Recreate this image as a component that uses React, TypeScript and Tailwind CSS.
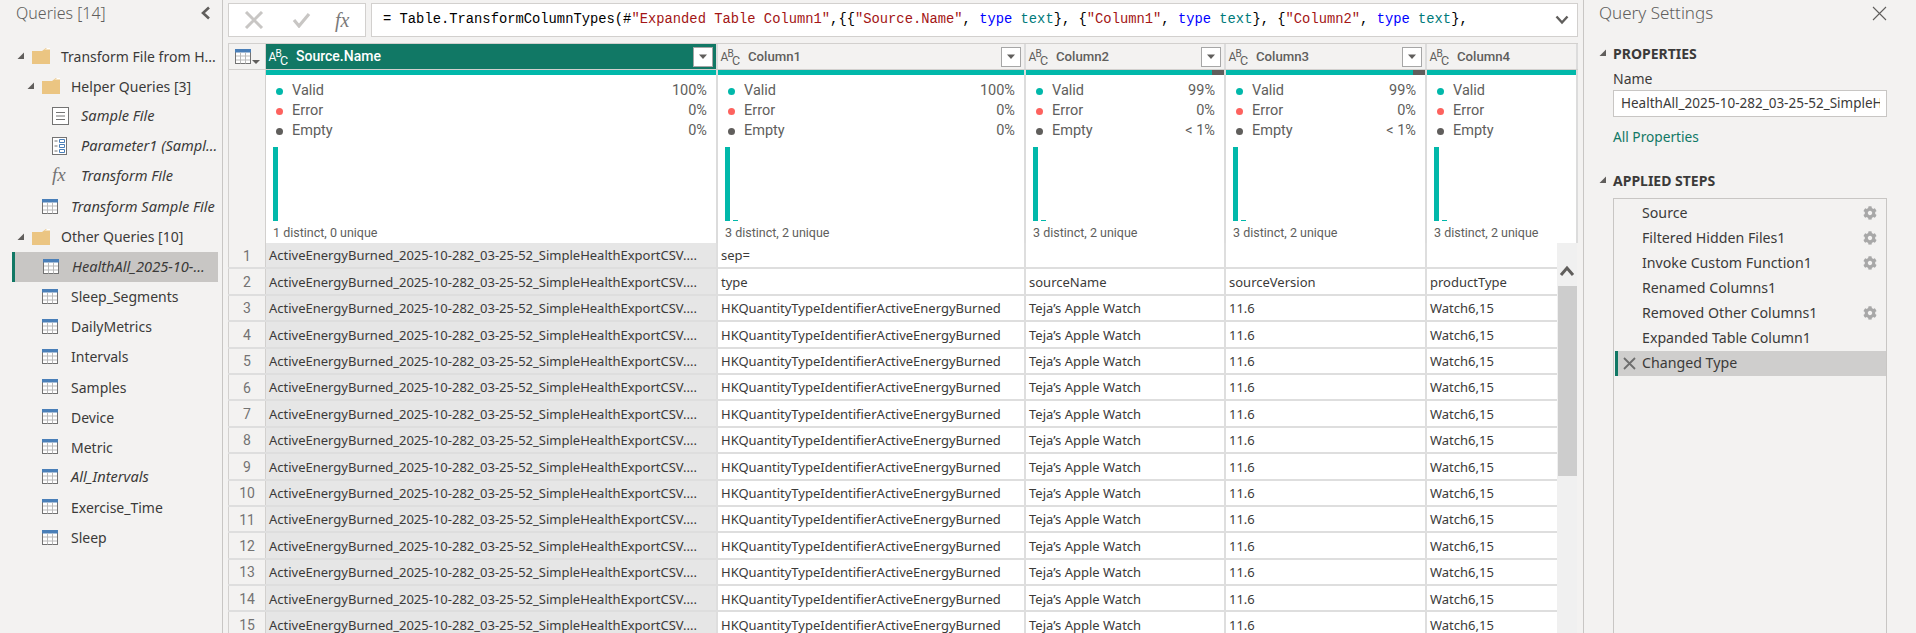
import { FaCog } from 'react-icons/fa';

const ui = "font-['Noto_Sans',sans-serif]";
const din = "font-['Roboto',sans-serif]";

function TableIcon() {
  return (
    <svg width="17" height="16" viewBox="0 0 17 16" className="shrink-0">
      <rect x="0.5" y="0.5" width="15" height="14" fill="#fff" stroke="#737373" />
      <rect x="0" y="0" width="16" height="3.5" fill="#4a7fb8" />
      <path d="M5.5 3.5v11M10.5 3.5v11M1 7h14M1 11h14" stroke="#b9b9b9" fill="none" />
    </svg>
  );
}

function FolderIcon() {
  return (
    <svg width="18" height="16" viewBox="0 0 18 16" className="shrink-0">
      <path d="M0 3h10l4-3h4v16H0z" fill="#ebc582" />
      <path d="M12 2.2l3-2.2h3v1.6h-4.5z" fill="#fff" />
    </svg>
  );
}

function Caret() {
  return (
    <svg width="8" height="8" viewBox="0 0 8 8" className="shrink-0">
      <path d="M7 0.5V7H0.5z" fill="#605e5c" />
    </svg>
  );
}

function DocIcon() {
  return (
    <svg width="17" height="18" viewBox="0 0 17 18" className="shrink-0">
      <rect x="0.5" y="0.5" width="16" height="17" fill="#fff" stroke="#737373" />
      <path d="M4 5.5h9M4 9h9M4 12.5h9" stroke="#737373" fill="none" />
    </svg>
  );
}

function ParamIcon() {
  return (
    <svg width="15" height="18" viewBox="0 0 15 18" className="shrink-0">
      <rect x="0.5" y="0.5" width="14" height="17" fill="#fff" stroke="#737373" />
      <path d="M2.5 4h3M2.5 9h3M2.5 14h3" stroke="#737373" fill="none" />
      <path d="M7.5 2.5h5v3h-5zM7.5 7.5h5v3h-5zM7.5 12.5h5v3h-5z" stroke="#4a7fb8" fill="none" />
    </svg>
  );
}

function FxGlyph({ className }: { className: string }) {
  return <span className={"font-['Liberation_Serif',serif] italic leading-none " + className}>fx</span>;
}

function AbcIcon({ color }: { color: string }) {
  return (
    <svg width="20" height="20" viewBox="0 0 20 20" className="shrink-0" fill={color} fontFamily="Roboto, sans-serif" fontWeight="400">
      <text x="0.5" y="14" fontSize="12">A</text>
      <text x="7.5" y="9.5" fontSize="10">B</text>
      <text x="12" y="18" fontSize="12.5">C</text>
    </svg>
  );
}

function FilterButton() {
  return (
    <div className="w-[20px] h-[20px] shrink-0 bg-white border border-[#a6a6a6] flex items-center justify-center">
      <svg width="10" height="6" viewBox="0 0 10 6">
        <path d="M1 0.5h8L5 5z" fill="#605e5c" />
      </svg>
    </div>
  );
}

const queries = [
  { label: 'Transform File from H...', pad: 'pl-[5px]', caret: true, icon: 'folder' },
  { label: 'Helper Queries [3]', pad: 'pl-[15px]', caret: true, icon: 'folder' },
  { label: 'Sample File', pad: 'pl-[40px]', icon: 'doc', italic: true },
  { label: 'Parameter1 (Sampl...', pad: 'pl-[40px]', icon: 'param', italic: true },
  { label: 'Transform File', pad: 'pl-[40px]', icon: 'fx', italic: true },
  { label: 'Transform Sample File', pad: 'pl-[30px]', icon: 'table', italic: true },
  { label: 'Other Queries [10]', pad: 'pl-[5px]', caret: true, icon: 'folder' },
  { label: 'HealthAll_2025-10-...', pad: 'pl-[31px]', icon: 'table', italic: true, selected: true },
  { label: 'Sleep_Segments', pad: 'pl-[30px]', icon: 'table' },
  { label: 'DailyMetrics', pad: 'pl-[30px]', icon: 'table' },
  { label: 'Intervals', pad: 'pl-[30px]', icon: 'table' },
  { label: 'Samples', pad: 'pl-[30px]', icon: 'table' },
  { label: 'Device', pad: 'pl-[30px]', icon: 'table' },
  { label: 'Metric', pad: 'pl-[30px]', icon: 'table' },
  { label: 'All_Intervals', pad: 'pl-[30px]', icon: 'table', italic: true },
  { label: 'Exercise_Time', pad: 'pl-[30px]', icon: 'table' },
  { label: 'Sleep', pad: 'pl-[30px]', icon: 'table' },
];

function QueriesPanel() {
  return (
    <aside className={'w-[223px] shrink-0 bg-[#f3f2f1] border-r border-[#c8c6c4] ' + ui}>
      <div className="h-[42px] pl-[16px] pr-[10px] pb-[17px] flex items-center justify-between">
        <span className="text-[16px] font-light text-[#605e5c]">Queries [14]</span>
        <svg width="11" height="14" viewBox="0 0 11 14" className="mr-[1px]">
          <path d="M9 1.5L3 7l6 5.5" stroke="#605e5c" strokeWidth="2.6" fill="none" />
        </svg>
      </div>
      <div className="ml-[12px] mr-[4px] text-[14px] text-[#3b3a39] -mt-[1px]">
        {queries.map((q) => (
          <div
            key={q.label}
            className={
              'h-[30.1px] flex items-center whitespace-nowrap overflow-hidden ' +
              q.pad +
              (q.selected ? ' bg-[#c8c6c4] border-l-[3px] border-[#117865] !pl-[28px]' : '') +
              (q.italic ? ' italic text-[14.6px]' : '')
            }
          >
            {q.caret && (
              <span className="w-[15px] shrink-0">
                <Caret />
              </span>
            )}
            <span className="w-[29px] shrink-0">
              {q.icon === 'folder' && <FolderIcon />}
              {q.icon === 'table' && <TableIcon />}
              {q.icon === 'doc' && <DocIcon />}
              {q.icon === 'param' && <ParamIcon />}
              {q.icon === 'fx' && <FxGlyph className="text-[19px] text-[#737373]" />}
            </span>
            <span>{q.label}</span>
          </div>
        ))}
      </div>
    </aside>
  );
}

function FormulaBar() {
  const kw = 'text-[#0000ff]';
  const str = 'text-[#a31515]';
  const ty = 'text-[#007a7a]';
  return (
    <div className="h-[43px] pt-[3px] pb-[6px] flex gap-[5px] shrink-0">
      <div className="w-[138px] bg-white border border-[#d2d0ce] flex items-center">
        <svg width="20" height="18" viewBox="0 0 20 18" className="ml-[15px]">
          <path d="M2 1l16 16M18 1L2 17" stroke="#c8c6c4" strokeWidth="3" />
        </svg>
        <svg width="19" height="16" viewBox="0 0 19 16" className="ml-[28px]">
          <path d="M2 8l5 6L17 2" stroke="#c8c6c4" strokeWidth="3.2" fill="none" />
        </svg>
        <FxGlyph className="ml-[24px] text-[20px] text-[#7a7a7a]" />
      </div>
      <div className="w-[1207px] bg-white border border-[#d2d0ce] flex items-center justify-between pl-[11px] pr-[8px]">
        <span className="font-['Liberation_Mono',monospace] text-[13.8px] whitespace-pre text-black">
          {'= Table.TransformColumnTypes(#'}
          <span className={str}>"Expanded Table Column1"</span>
          {',{{'}
          <span className={str}>"Source.Name"</span>
          {', '}
          <span className={kw}>type</span> <span className={ty}>text</span>
          {'}, {'}
          <span className={str}>"Column1"</span>
          {', '}
          <span className={kw}>type</span> <span className={ty}>text</span>
          {'}, {'}
          <span className={str}>"Column2"</span>
          {', '}
          <span className={kw}>type</span> <span className={ty}>text</span>
          {'},'}
        </span>
        <svg width="14" height="10" viewBox="0 0 14 10">
          <path d="M1.5 1.5L7 7.5l5.5-6" stroke="#605e5c" strokeWidth="2.4" fill="none" />
        </svg>
      </div>
    </div>
  );
}

const columns = [
  { name: 'Source.Name', width: 'w-[452px]', stats: ['100%', '0%', '0%'], footer: '1 distinct, 0 unique', small: false, gray: false, active: true, filter: true },
  { name: 'Column1', width: 'w-[308px]', stats: ['100%', '0%', '0%'], footer: '3 distinct, 2 unique', small: true, gray: false, active: false, filter: true },
  { name: 'Column2', width: 'w-[200px]', stats: ['99%', '0%', '< 1%'], footer: '3 distinct, 2 unique', small: true, gray: true, active: false, filter: true },
  { name: 'Column3', width: 'w-[201px]', stats: ['99%', '0%', '< 1%'], footer: '3 distinct, 2 unique', small: true, gray: true, active: false, filter: true },
  { name: 'Column4', width: 'w-[151px]', stats: ['', '', ''], footer: '3 distinct, 2 unique', small: true, gray: false, active: false, filter: false },
];

const dots = [
  { label: 'Valid', color: 'bg-[#01b8aa]' },
  { label: 'Error', color: 'bg-[#fd625e]' },
  { label: 'Empty', color: 'bg-[#605e5c]' },
];

function HeaderRow() {
  return (
    <div className="h-[27px] flex shrink-0 border-y border-[#d2d0ce] bg-[#f3f2f1] overflow-hidden">
      <div className="w-[38px] shrink-0 flex items-center pl-[6px] border-x border-[#d2d0ce]">
        <TableIcon />
        <svg width="8" height="4" viewBox="0 0 8 4" className="self-end mb-[5px]">
          <path d="M0 0h8L4 4z" fill="#605e5c" />
        </svg>
      </div>
      {columns.map((c) => (
        <div
          key={c.name}
          className={
            'shrink-0 flex items-center pl-[2px] pr-[3px] border-r-2 border-[#dcdcdc] font-medium ' +
            c.width +
            (c.active ? ' bg-[#117865] text-white' : ' text-[#605e5c]')
          }
        >
          <AbcIcon color={c.active ? '#ffffff' : '#605e5c'} />
          <span className={'ml-[8px] flex-1 ' + din + (c.active ? ' text-[14px]' : ' text-[13.2px]')}>{c.name}</span>
          {c.filter && <FilterButton />}
        </div>
      ))}
    </div>
  );
}

function ProfileRow() {
  return (
    <div className="h-[173px] flex shrink-0 overflow-hidden">
      <div className="w-[38px] shrink-0 bg-[#f3f2f1] border-x border-[#d2d0ce]" />
      {columns.map((c) => (
        <div key={c.name} className={'shrink-0 bg-white flex flex-col border-r-2 border-[#dcdcdc] ' + c.width + ' ' + din}>
          <div className="h-[5px] flex">
            <div className="flex-1 bg-[#01b8aa]" />
            {c.gray && <div className="w-[12px] bg-[#605e5c]" />}
          </div>
          <div className="pt-[6px] pl-[7px] pr-[9px] text-[14.5px] text-[#605e5c]">
            {dots.map((d, i) => (
              <div key={d.label} className="h-[20px] flex items-center">
                <span className={'w-[7px] h-[7px] rounded-full ml-[3px] mr-[9px] ' + d.color} />
                <span className="flex-1">{d.label}</span>
                <span>{c.stats[i]}</span>
              </div>
            ))}
          </div>
          <div className="h-[74px] mt-[6px] ml-[7px] flex items-end gap-[3px]">
            <div className="w-[5px] h-full bg-[#01b8aa]" />
            {c.small && <div className="w-[5px] h-[1px] bg-[#01b8aa]" />}
          </div>
          <div className="mt-[3px] ml-[7px] text-[12.5px] text-[#605e5c] whitespace-nowrap">{c.footer}</div>
        </div>
      ))}
    </div>
  );
}

const source = 'ActiveEnergyBurned_2025-10-282_03-25-52_SimpleHealthExportCSV....';
const rows = Array.from({ length: 15 }, (_, i) => {
  if (i === 0) return ['sep=', '', '', ''];
  if (i === 1) return ['type', 'sourceName', 'sourceVersion', 'productType'];
  return ['HKQuantityTypeIdentifierActiveEnergyBurned', 'Teja’s Apple Watch', '11.6', 'Watch6,15'];
});
const cellWidths = ['w-[308px]', 'w-[200px]', 'w-[201px]', 'w-[130px]'];

function DataRows() {
  return (
    <div className={'flex-1 min-h-0 flex overflow-hidden text-[13px] text-[#3b3a39] ' + ui}>
      <div className="w-[1329px] shrink-0">
        {rows.map((r, i) => (
          <div key={i} className="h-[26.4px] flex border-b-2 border-[#dedede]">
            <div className={'w-[38px] shrink-0 bg-[#f3f2f1] border-x border-[#d2d0ce] flex items-center justify-center pt-[2px] text-[14px] text-[#737373] ' + din}>{i + 1}</div>
            <div className="w-[452px] shrink-0 bg-[#e6e6e6] border-r-2 border-[#dedede] flex items-center pl-[3px] pt-[2px] whitespace-nowrap overflow-hidden">{source}</div>
            {r.map((v, j) => (
              <div key={j} className={'shrink-0 bg-white flex items-center pl-[3px] pt-[2px] whitespace-nowrap border-r-2 border-[#dedede] last:border-r-0 ' + cellWidths[j]}>
                {v}
              </div>
            ))}
          </div>
        ))}
      </div>
      <div className="w-[20px] shrink-0 bg-[#f0f0f0] flex flex-col items-center">
        <div className="h-[43px] pt-[22px]">
          <svg width="16" height="12" viewBox="0 0 16 12">
            <path d="M2 10l6-7 6 7" stroke="#605e5c" strokeWidth="3" fill="none" />
          </svg>
        </div>
        <div className="w-[19px] h-[190px] bg-[#cdcdcd]" />
      </div>
    </div>
  );
}

const steps = [
  { label: 'Source', gear: true },
  { label: 'Filtered Hidden Files1', gear: true },
  { label: 'Invoke Custom Function1', gear: true },
  { label: 'Renamed Columns1', gear: false },
  { label: 'Removed Other Columns1', gear: true },
  { label: 'Expanded Table Column1', gear: false },
];

function SettingsPanel() {
  return (
    <aside className={'w-[333px] shrink-0 bg-[#f3f2f1] border-l border-[#c8c6c4] pl-[15px] pr-[29px] text-[#3b3a39] ' + ui}>
      <div className="h-[26px] flex items-center justify-between">
        <span className="text-[17px] font-light text-[#605e5c]">Query Settings</span>
        <svg width="15" height="15" viewBox="0 0 15 15">
          <path d="M1 1l13 13M14 1L1 14" stroke="#605e5c" strokeWidth="1.1" />
        </svg>
      </div>
      <div className="mt-[16px] h-[22px] flex items-center gap-[6px] text-[14px] font-bold">
        <Caret />
        <span>PROPERTIES</span>
      </div>
      <div className="ml-[14px]">
        <div className="mt-[3px] h-[22px] flex items-center text-[14px]">Name</div>
        <div className="h-[27px] mt-[1px] bg-white border border-[#c8c6c4] pl-[7px] pr-[6px] flex items-center">
          <span className="block min-w-0 overflow-hidden whitespace-nowrap text-[13.5px]">HealthAll_2025-10-282_03-25-52_SimpleH</span>
        </div>
        <div className="mt-[9px] h-[22px] flex items-center text-[13.7px] text-[#117865]">All Properties</div>
      </div>
      <div className="mt-[20px] h-[24px] flex items-center gap-[6px] text-[14px] font-bold">
        <Caret />
        <span>APPLIED STEPS</span>
      </div>
      <div className="ml-[14px] mt-[6px] h-[440px] border border-[#c8c6c4] pt-[1px] text-[14.2px]">
        {steps.map((s) => (
          <div key={s.label} className="h-[25.1px] pl-[28px] pr-[9px] flex items-center justify-between">
            <span>{s.label}</span>
            {s.gear && <FaCog className="text-[14px] text-[#a8a8a8]" />}
          </div>
        ))}
        <div className="h-[25px] ml-[1px] bg-[#cfcecd] border-l-[3px] border-[#117865] pl-[5px] flex items-center gap-[6px]">
          <svg width="13" height="13" viewBox="0 0 13 13">
            <path d="M1 1l11 11M12 1L1 12" stroke="#6e6e6e" strokeWidth="1.8" />
          </svg>
          <span>Changed Type</span>
        </div>
      </div>
    </aside>
  );
}

export default function App() {
  return (
    <div className="w-[1916px] h-[633px] flex overflow-hidden bg-[#f3f2f1]">
      <QueriesPanel />
      <main className="w-[1360px] shrink-0 pl-[5px] flex flex-col">
        <FormulaBar />
        <div className="w-[1350px] flex-1 min-h-0 flex flex-col">
          <HeaderRow />
          <ProfileRow />
          <DataRows />
        </div>
      </main>
      <SettingsPanel />
    </div>
  );
}
